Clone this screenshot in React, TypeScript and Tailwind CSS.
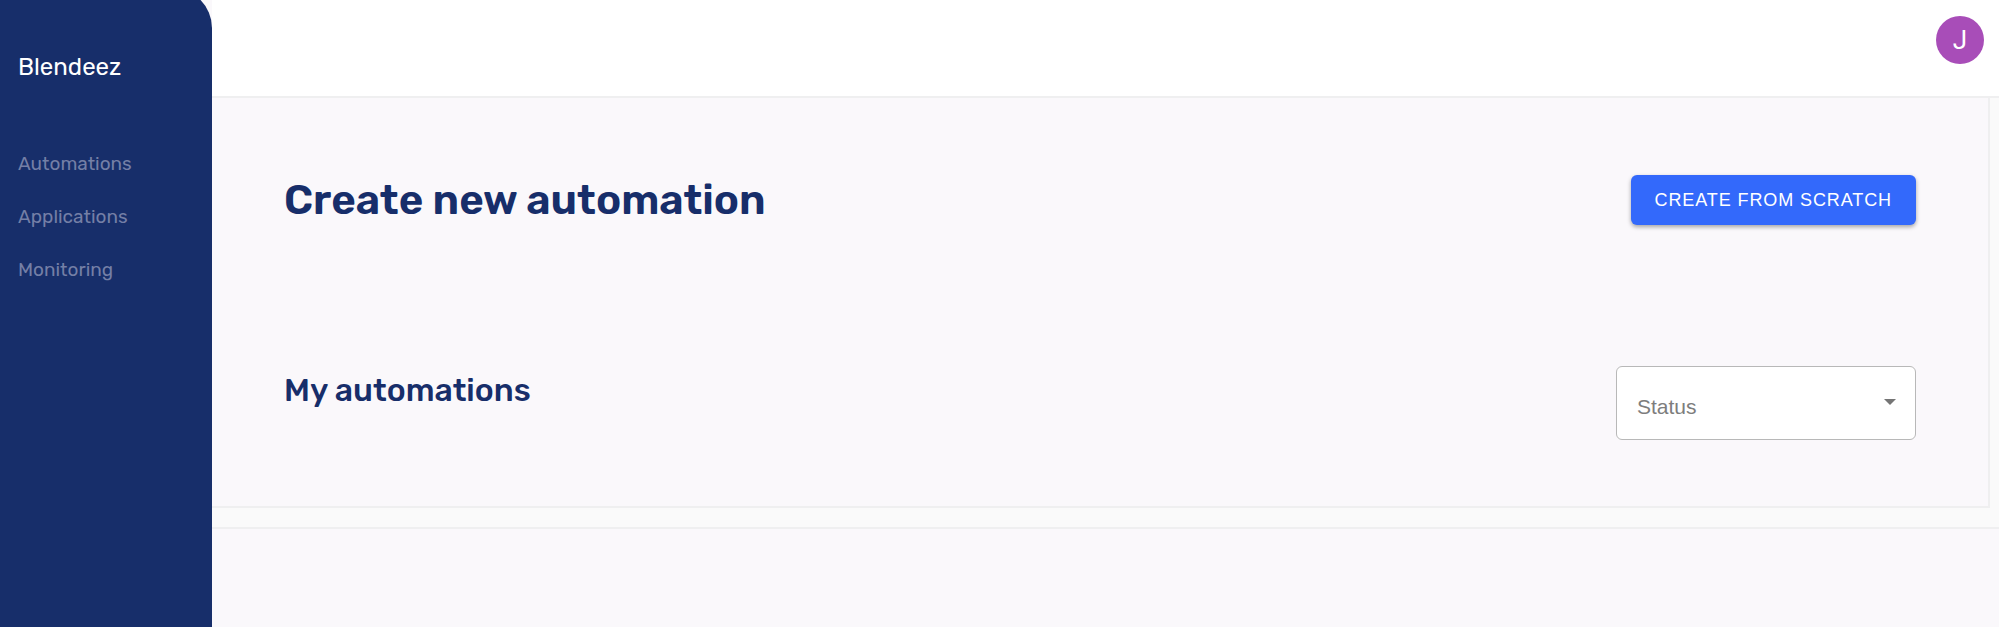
import { useState } from "react";

const navItems = [
  { label: "Automations", href: "#automations" },
  { label: "Applications", href: "#applications" },
  { label: "Monitoring", href: "#monitoring" },
];

function Sidebar() {
  return (
    <aside className="w-[212px] shrink-0 -mt-3 pt-[63px] px-[18px] rounded-tr-[40px] bg-[#172e6a]">
      <a href="#home" className="block text-2xl leading-8 text-white">
        Blendeez
      </a>
      <nav className="mt-[67px] flex flex-col gap-[25px]">
        {navItems.map((item) => (
          <a key={item.label} href={item.href} className="text-[19px] leading-7 text-[#747fa6] hover:text-white">
            {item.label}
          </a>
        ))}
      </nav>
    </aside>
  );
}

export default function App() {
  const [status, setStatus] = useState("");

  return (
    <div className="flex min-h-screen overflow-hidden bg-[#faf8fb] font-['Rubik','Roboto',sans-serif]">
      <Sidebar />

      <div className="flex min-w-0 grow flex-col">
        <header className="flex h-24 items-start justify-end bg-white px-[15px] pt-4">
          <button
            type="button"
            aria-label="Account"
            className="flex size-12 items-center justify-center rounded-full bg-[#a84db8] font-['Roboto',sans-serif] text-[26px] text-white"
          >
            J
          </button>
        </header>

        <div className="border-y-2 border-[#efeff0] bg-[#fafafa] pr-[9px] pb-[19px]">
          <main className="border-r-2 border-b-2 border-[#efeff0] bg-[#faf8fb] pt-[77px] pr-[72px] pb-[66px] pl-[72px]">
            <section className="flex items-center justify-between">
              <h1 className="text-[42px] leading-[50px] font-semibold text-[#172e6a]">Create new automation</h1>
              <button
                type="button"
                className="h-[50px] rounded-md bg-[#3369fb] px-6 font-['Liberation_Sans',sans-serif] text-lg tracking-wider text-white shadow-[0_2px_4px_rgba(0,0,0,0.35)] hover:bg-[#2457e0]"
              >
                CREATE FROM SCRATCH
              </button>
            </section>

            <section className="mt-[141px] flex items-start justify-between">
              <h2 className="pt-1 text-[32px] leading-10 font-medium text-[#172e6a]">My automations</h2>
              <div className="relative w-[300px]">
                <select
                  aria-label="Status"
                  value={status}
                  onChange={(e) => setStatus(e.target.value)}
                  className="h-[74px] w-full appearance-none rounded-md border border-[#b8b8b8] bg-white px-5 pt-2 font-['Liberation_Sans',sans-serif] text-[21px] text-[#7d7d7d]"
                >
                  <option value="">Status</option>
                  <option value="active">Active</option>
                  <option value="inactive">Inactive</option>
                </select>
                <svg
                  className="pointer-events-none absolute top-[33px] right-5 h-[6px] w-3 text-[#757575]"
                  viewBox="0 0 12 6"
                  fill="currentColor"
                >
                  <path d="M0 0h12L6 6z" />
                </svg>
              </div>
            </section>
          </main>
        </div>
      </div>
    </div>
  );
}
